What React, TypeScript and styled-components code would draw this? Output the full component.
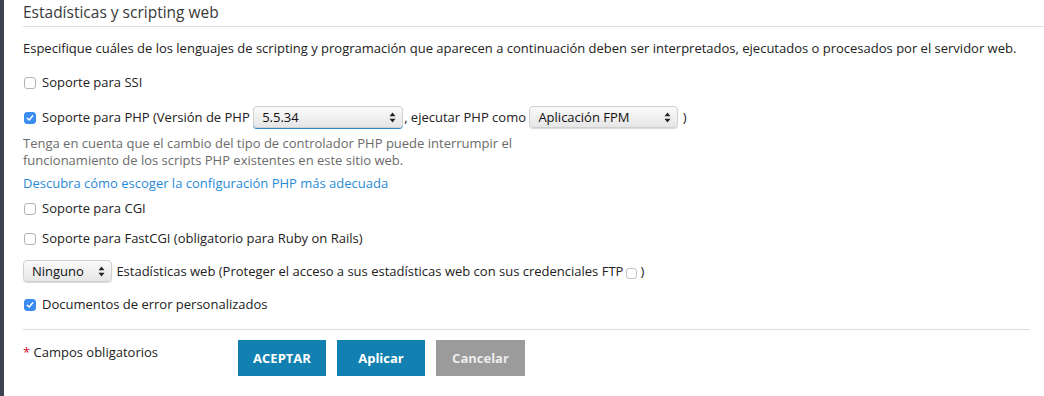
import styled, { createGlobalStyle } from "styled-components";

const GlobalStyle = createGlobalStyle`
  html, body {
    margin: 0;
    padding: 0;
    background: #fff;
  }
  body {
    font-family: "Open Sans", "Noto Sans", sans-serif;
    font-size: 13px;
    color: #222;
  }
`;

const Page = styled.div`
  display: flex;
  width: 1044px;
  height: 396px;
  overflow: hidden;
`;

const SideBar = styled.div`
  width: 4px;
  flex: none;
  background: #3b4450;
`;

const Content = styled.div`
  flex: 1;
  padding: 0 0 0 19px;
`;

const Title = styled.h2`
  margin: 0;
  padding: 2px 0 3px;
  font-size: 15.5px;
  font-weight: 400;
  line-height: 21px;
  color: #3a3a3a;
  border-bottom: 1px solid #dcdcdc;
`;

const Intro = styled.p`
  margin: 11px 0 0;
  line-height: 20px;
`;

const Row = styled.div<{ $top: number }>`
  display: flex;
  align-items: center;
  margin-top: ${(p) => p.$top}px;
  min-height: 20px;
  white-space: pre;
`;

const Box = styled.span<{ $checked?: boolean }>`
  display: inline-flex;
  align-items: center;
  justify-content: center;
  width: 12px;
  height: 12px;
  flex: none;
  margin: 1px 6px 0 1px;
  border-radius: 3px;
  box-sizing: border-box;
  border: 1px solid ${(p) => (p.$checked ? "#3a8cf0" : "#b4b4b4")};
  background: ${(p) => (p.$checked ? "#3a8cf0" : "#fff")};
`;

const SmallBox = styled(Box)`
  margin: 4px 3px 0 3px;
  width: 11px;
  height: 11px;
  border-color: #c4c4c4;
`;

const Check = () => (
  <svg width="8" height="8" viewBox="0 0 8 8">
    <path d="M1.3 4.2 L3.2 6 L6.7 1.8" fill="none" stroke="#fff" strokeWidth="1.5" strokeLinecap="round" strokeLinejoin="round" />
  </svg>
);

const Select = styled.span<{ $width: number; $focused?: boolean }>`
  display: inline-flex;
  align-items: center;
  justify-content: space-between;
  box-sizing: border-box;
  width: ${(p) => p.$width}px;
  height: 22px;
  padding: 0 6px 0 8px;
  margin: 0 1px 0 0;
  border-radius: 4px;
  font-size: 13px;
  color: #111;
  background: linear-gradient(#fafafa, #e6e6e6);
  border: 1px solid #d0d0d0;
  box-shadow: ${(p) => (p.$focused ? "0 1px 0 #2f86c8" : "0 1px 1px rgba(0,0,0,0.15)")};
`;

const Arrows = () => (
  <svg width="7" height="11" viewBox="0 0 7 11">
    <path d="M3.5 0.5 L6.5 4.2 H0.5 Z M3.5 10.5 L0.5 6.8 H6.5 Z" fill="#222" />
  </svg>
);

const Note = styled.div`
  margin: 7px 0 0;
  width: 500px;
  line-height: 17px;
  color: #6b6b6b;
`;

const Link = styled.a`
  display: block;
  margin-top: 6px;
  line-height: 17px;
  color: #2a8ad8;
  text-decoration: none;
`;

const Separator = styled.hr`
  margin: 15px 14px 0 0;
  border: 0;
  border-top: 1px solid #dcdcdc;
`;

const Footer = styled.div`
  display: flex;
  align-items: flex-start;
  margin-top: 10px;
`;

const Required = styled.div`
  width: 215px;
  padding-top: 4px;
  line-height: 17px;
  span {
    color: #d0021b;
  }
`;

const Buttons = styled.div`
  display: flex;
  gap: 11px;
`;

const Button = styled.button<{ $muted?: boolean }>`
  height: 36px;
  width: ${(p) => (p.$muted ? 89 : 88)}px;
  padding: 0;
  border: 0;
  font-family: inherit;
  font-size: 13px;
  font-weight: 700;
  color: ${(p) => (p.$muted ? "#ececec" : "#fff")};
  background: ${(p) => (p.$muted ? "#9b9b9b" : "#1280b0")};
  cursor: pointer;
`;

export default function App() {
  return (
    <Page>
      <GlobalStyle />
      <SideBar />
      <Content>
        <Title>Estadísticas y scripting web</Title>
        <Intro>
          Especifique cuáles de los lenguajes de scripting y programación que aparecen a continuación deben ser
          interpretados, ejecutados o procesados por el servidor web.
        </Intro>

        <Row $top={14}>
          <Box />
          Soporte para SSI
        </Row>

        <Row $top={14}>
          <Box $checked>
            <Check />
          </Box>
          {"Soporte para PHP (Versión de PHP "}
          <Select $width={150} $focused>
            5.5.34
            <Arrows />
          </Select>
          {", ejecutar PHP como "}
          <Select $width={149}>
            Aplicación FPM
            <Arrows />
          </Select>
          {" )"}
        </Row>

        <Note>
          Tenga en cuenta que el cambio del tipo de controlador PHP puede interrumpir el funcionamiento de los
          scripts PHP existentes en este sitio web.
        </Note>
        <Link href="#">Descubra cómo escoger la configuración PHP más adecuada</Link>

        <Row $top={6}>
          <Box />
          Soporte para CGI
        </Row>

        <Row $top={10}>
          <Box />
          Soporte para FastCGI (obligatorio para Ruby on Rails)
        </Row>

        <Row $top={12}>
          <Select $width={89}>
            Ninguno
            <Arrows />
          </Select>
          {" Estadísticas web (Proteger el acceso a sus estadísticas web con sus credenciales FTP"}
          <SmallBox />)
        </Row>

        <Row $top={12}>
          <Box $checked>
            <Check />
          </Box>
          Documentos de error personalizados
        </Row>

        <Separator />

        <Footer>
          <Required>
            <span>*</span> Campos obligatorios
          </Required>
          <Buttons>
            <Button>ACEPTAR</Button>
            <Button>Aplicar</Button>
            <Button $muted>Cancelar</Button>
          </Buttons>
        </Footer>
      </Content>
    </Page>
  );
}
